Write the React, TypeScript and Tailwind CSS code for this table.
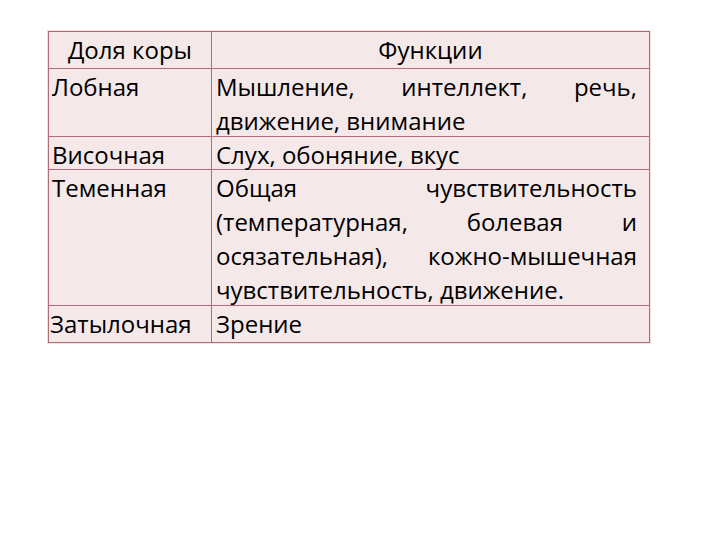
import React from "react";

const J = ({ children }: { children: React.ReactNode }) => (
  <div className="text-justify [text-align-last:justify]">{children}</div>
);

export default function App() {
  return (
    <div className="w-[720px] h-[540px] bg-white font-['Open_Sans',sans-serif] text-[24px] leading-[34px] text-black">
      <div className="pt-[31px] pl-[48px]">
        <div className="w-[602px] border border-[#b06c77] bg-[#f4e8e8] shadow-[0_0_0_1px_#f6dede]">
          <div className="flex h-[37px] border-b border-[#b06c77]">
            <div className="w-[163px] border-r border-[#b06c77] pt-[1px] text-center">Доля коры</div>
            <div className="flex-1 pt-[1px] text-center">Функции</div>
          </div>
          <div className="flex h-[68px] border-b border-[#b06c77]">
            <div className="w-[163px] border-r border-[#b06c77] pt-[1px] pl-[3px]">Лобная</div>
            <div className="flex-1 pt-[1px] pl-[4px] pr-[12px]">
              <J>Мышление, интеллект, речь,</J>
              <div>движение, внимание</div>
            </div>
          </div>
          <div className="flex h-[33px] border-b border-[#b06c77]">
            <div className="w-[163px] border-r border-[#b06c77] pt-[1px] pl-[3px]">Височная</div>
            <div className="flex-1 pt-[1px] pl-[4px] pr-[12px]">Слух, обоняние, вкус</div>
          </div>
          <div className="flex h-[136px] border-b border-[#b06c77]">
            <div className="w-[163px] border-r border-[#b06c77] pt-[1px] pl-[3px]">Теменная</div>
            <div className="flex-1 pt-[1px] pl-[4px] pr-[12px]">
              <J>Общая чувствительность</J>
              <J>(температурная, болевая и</J>
              <J>осязательная), кожно-мышечная</J>
              <div>чувствительность, движение.</div>
            </div>
          </div>
          <div className="flex h-[36px]">
            <div className="w-[163px] border-r border-[#b06c77] pt-[1px] pl-[1px]">Затылочная</div>
            <div className="flex-1 pt-[1px] pl-[4px] pr-[12px]">Зрение</div>
          </div>
        </div>
      </div>
    </div>
  );
}
